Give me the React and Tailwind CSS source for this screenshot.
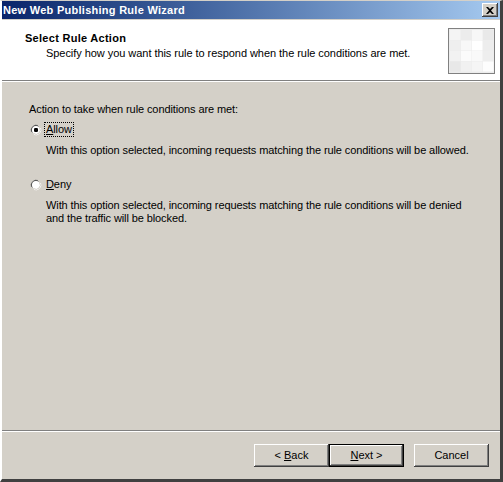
import React from 'react';

const font = { fontFamily: '"Liberation Sans", Arial, sans-serif' };

const btn3d =
  'shadow-[inset_-1px_-1px_#404040,inset_1px_1px_#ffffff,inset_-2px_-2px_#808080,inset_2px_2px_#d4d0c8]';

function Radio({ checked }) {
  return (
    <svg width="12" height="12" viewBox="0 0 12 12" className="shrink-0">
      <path d="M8 1.5 A5 5 0 0 0 1.5 8" fill="none" stroke="#808080" strokeWidth="1" />
      <path d="M8.5 2.5 A4.3 4.3 0 0 0 2.5 8.5" fill="none" stroke="#404040" strokeWidth="1" />
      <circle cx="6" cy="6" r="4" fill="#ffffff" />
      <path d="M4 10.5 A5 5 0 0 0 10.5 4" fill="none" stroke="#ffffff" strokeWidth="1" />
      <path d="M3.5 9.5 A4.3 4.3 0 0 0 9.5 3.5" fill="none" stroke="#d4d0c8" strokeWidth="1" />
      {checked && <rect x="4" y="4" width="4" height="4" rx="1.2" fill="#000000" />}
    </svg>
  );
}

function HeaderIcon() {
  const cells = [
    ['#f4f4f4', '#ececec', '#f7f7f7', '#e9e9e9'],
    ['#efefef', '#f8f8f8', '#ffffff', '#ededed'],
    ['#f2f2f2', '#fbfbfb', '#f9f9f9', '#eeeeee'],
    ['#e8e8e8', '#f1f1f1', '#f5f5f5', '#fdfdfd'],
  ];
  return (
    <svg width="47" height="46" viewBox="0 0 47 46" className="shrink-0">
      <rect x="0.5" y="0.5" width="46" height="45" fill="#ececec" stroke="#808080" />
      {cells.map((row, r) =>
        row.map((c, i) => (
          <rect key={r + '-' + i} x={2 + i * 11} y={2 + r * 10.5} width="10.5" height="10" fill={c} />
        ))
      )}
    </svg>
  );
}

function Button({ children, isDefault }) {
  if (isDefault) {
    return (
      <div className="w-[75px] h-[23px] border border-black">
        <div className={`w-full h-full bg-[#d4d0c8] flex items-center justify-center text-[11px] text-black ${btn3d}`}>
          {children}
        </div>
      </div>
    );
  }
  return (
    <div className={`w-[75px] h-[23px] bg-[#d4d0c8] flex items-center justify-center text-[11px] text-black ${btn3d}`}>
      {children}
    </div>
  );
}

export default function App() {
  return (
    <div style={font} className="w-[503px] h-[482px] bg-[#d4d0c8] flex flex-col border-t border-l-2 border-t-[#d4d0c8] border-l-[#ffffff] border-r-[3px] border-r-[#404040] border-b-[3px] border-b-[#404040] overflow-hidden">
      {/* title bar */}
      <div className="h-[18px] shrink-0 flex items-center justify-between bg-gradient-to-r from-[#0a246a] to-[#a6caf0] pl-[1px] pr-[2px]">
        <span className="text-[11px] font-bold text-white leading-none tracking-[0.27px]">New Web Publishing Rule Wizard</span>
        <div className={`w-[16px] h-[14px] bg-[#d4d0c8] flex items-center justify-center ${btn3d}`}>
          <svg width="8" height="7" viewBox="0 0 8 7">
            <path d="M0 0h2l2 2 2-2h2L5 3.5 8 7H6L4 5 2 7H0l3-3.5z" fill="#000" />
          </svg>
        </div>
      </div>

      {/* header */}
      <div className="h-[60px] shrink-0 bg-white flex justify-between pl-[23px] pr-[5px] mt-[1px]">
        <div className="pt-[12px]">
          <div className="text-[11px] font-bold leading-[13px] text-black tracking-[0.28px]">Select Rule Action</div>
          <div className="text-[11px] leading-[13px] text-black mt-[2px] ml-[21px] tracking-[-0.05px]">
            Specify how you want this rule to respond when the rule conditions are met.
          </div>
        </div>
        <div className="pt-[8px]">
          <HeaderIcon />
        </div>
      </div>
      <div className="h-px bg-[#808080] shrink-0" />
      <div className="h-px bg-white shrink-0" />

      {/* body */}
      <div className="flex-1 pl-[27px] pt-[21px] text-[11px] leading-[13px] text-black tracking-[-0.1px]">
        <div>Action to take when rule conditions are met:</div>
        <div className="flex items-center mt-[7px] ml-[1px]">
          <Radio checked />
          <span className="ml-[3px] px-[1px] outline outline-1 outline-dotted outline-black">
            <span className="underline">A</span>llow
          </span>
        </div>
        <div className="mt-[8px] ml-[17px]">
          With this option selected, incoming requests matching the rule conditions will be allowed.
        </div>
        <div className="flex items-center mt-[21px] ml-[1px]">
          <Radio />
          <span className="ml-[4px]">
            <span className="underline">D</span>eny
          </span>
        </div>
        <div className="mt-[8px] ml-[17px]">
          With this option selected, incoming requests matching the rule conditions will be denied
          <br />
          and the traffic will be blocked.
        </div>
      </div>

      {/* footer */}
      <div className="h-px bg-[#808080] shrink-0" />
      <div className="h-px bg-white shrink-0" />
      <div className="h-[47px] shrink-0 flex items-start justify-end pt-[12px] pr-[11px]">
        <Button>
          &lt; <span className="underline ml-[3px]">B</span>ack
        </Button>
        <Button isDefault>
          <span className="underline">N</span>ext &gt;
        </Button>
        <div className="w-[10px]" />
        <Button>Cancel</Button>
      </div>
    </div>
  );
}
